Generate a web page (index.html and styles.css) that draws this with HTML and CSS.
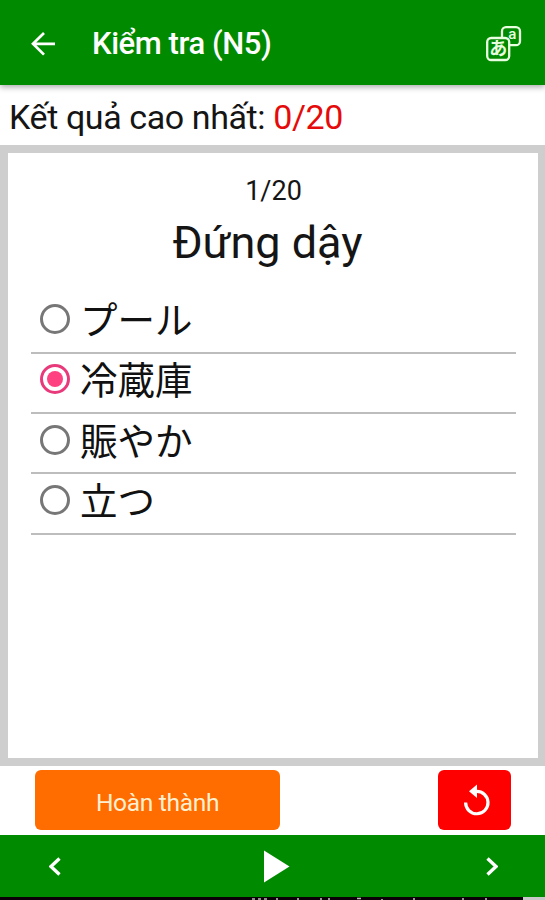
FILE: index.html
```html
<!DOCTYPE html>
<html lang="vi">
<head>
<meta charset="utf-8">
<meta name="viewport" content="width=device-width, initial-scale=1">
<title>Kiểm tra (N5)</title>
<link rel="stylesheet" href="styles.css">
</head>
<body>
<div class="app">
  <header class="topbar">
    <svg class="back" width="24" height="24" viewBox="0 0 24 24"><path d="M24 11.8H2M13 1L2 11.8L13 22.6"/></svg>
    <h1 class="title">Kiểm tra (N5)</h1>
    <svg class="translate" width="36" height="36" viewBox="0 0 36 36">
      <rect class="tile" x="16" y="1.2" width="18" height="18" rx="4"/>
      <rect class="tile" x="1.2" y="12" width="22" height="22" rx="4"/>
      <text class="latin" x="26.3" y="13.4">a</text>
      <text class="kana" x="12.2" y="29.3">あ</text>
    </svg>
  </header>
  <div class="score"><span class="score-label">Kết quả cao nhất:</span> <span class="score-value">0/20</span></div>
  <main class="frame">
    <section class="card">
      <div class="counter">1/20</div>
      <h2 class="question">Đứng dậy</h2>
      <div class="options">
        <div class="option"><span class="radio"></span><span class="answer" lang="ja">プール</span></div>
        <div class="option"><span class="radio selected"></span><span class="answer" lang="ja">冷蔵庫</span></div>
        <div class="option"><span class="radio"></span><span class="answer" lang="ja">賑やか</span></div>
        <div class="option"><span class="radio"></span><span class="answer" lang="ja">立つ</span></div>
      </div>
    </section>
  </main>
  <div class="actions">
    <button class="finish">Hoàn thành</button>
    <button class="restart" aria-label="Restart">
      <svg width="28" height="32" viewBox="0 0 28 32"><path class="ring" d="M13 7.4A11.2 11.2 0 1 1 2.6 18.5"/><path class="head" d="M14 .5V14L6 7.3Z"/></svg>
    </button>
  </div>
  <nav class="navbar">
    <svg width="12" height="19" viewBox="0 0 12 19"><path class="chevron" d="M10.5 1.5L2 9.5L10.5 17.5"/></svg>
    <svg class="play" width="26" height="33" viewBox="0 0 26 33"><path d="M0 .5L25.5 16.5L0 32.5Z"/></svg>
    <svg width="12" height="19" viewBox="0 0 12 19"><path class="chevron" d="M1.5 1.5L10 9.5L1.5 17.5"/></svg>
  </nav>
  <footer class="edge">
    <svg width="545" height="3" viewBox="0 0 545 3"><path class="ticks" d="M252 2h3M258 2h3M264 2h3M277 1v2M298 1v2M321 1v2M329 1v2M357 1.5h4M382 2v1M414 1v2M463 1v2M486 1v2"/><path class="corner" d="M523 0h22v3h-22z"/></svg>
  </footer>
</div>
</body>
</html>
```

FILE: styles.css
```css
* { box-sizing: border-box; }
body { margin: 0; background: #fff; color: #151515; font-family: Roboto, "Noto Sans CJK JP", sans-serif; }
svg { display: block; fill: none; }
.app { width: 545px; height: 900px; display: flex; flex-direction: column; overflow: hidden; }

.topbar { position: relative; height: 85px; flex: none; display: flex; align-items: center; padding: 2px 23px 0 31px; background: #008a00; box-shadow: 0 2px 6px rgba(0, 0, 0, .35); }
.back { stroke: #fff; stroke-width: 2.7; }
.title { margin: 0 auto 0 37px; font-size: 31px; font-weight: 500; line-height: 40px; letter-spacing: -.45px; color: #fff; white-space: nowrap; }
.tile { fill: #008a00; stroke: #e8ffe0; stroke-width: 2.3; }
.latin, .kana { fill: #e8ffe0; text-anchor: middle; }
.latin { font-size: 15px; font-weight: 500; }
.kana { font: 700 18px "Noto Sans CJK JP", sans-serif; }

.score { height: 60px; flex: none; padding: 12px 0 0 9px; font-size: 34px; line-height: 40px; letter-spacing: -.4px; white-space: nowrap; }
.score-value { color: #e50b0b; }

.frame { height: 621px; flex: none; padding: 8px 7px 8px 8px; background: #cecece; }
.card { height: 100%; padding: 22px 22px 0 23px; background: #fff; }
.counter { font-size: 27px; line-height: 32px; text-align: center; }
.question { margin: 8px 0 0; padding-right: 12px; font-size: 45px; font-weight: 400; line-height: 56px; text-align: center; }
.options { margin-top: 22.5px; }
.option { height: 60.3px; display: flex; align-items: center; gap: 10px; padding: 0 0 7px 9px; border-bottom: 2px solid #bdbdbd; font: 37.5px/50px "Noto Sans CJK JP", sans-serif; color: #111; }
.answer { padding-bottom: 2px; }
.radio { width: 30px; height: 30px; border: 3px solid #777; border-radius: 50%; display: grid; place-items: center; }
.selected { border-color: #e83a7b; }
.selected::after { content: ""; width: 16px; height: 16px; border-radius: 50%; background: #ff4081; }

.actions { height: 69px; flex: none; display: flex; justify-content: space-between; padding: 4px 34px 5px 35px; }
.actions button { border: 0; border-radius: 6px; padding: 0; }
.actions .finish { width: 245px; padding-top: 5px; background: #ff6c00; color: #fff0d2; font: 24.5px/30px Roboto, sans-serif; letter-spacing: -.3px; }
.actions .restart { width: 73px; padding-left: 4px; background: #f00; display: grid; place-items: center; }
.ring { stroke: #fff; stroke-width: 3.2; }
.head { fill: #fff; }

.navbar { height: 62px; flex: none; display: flex; align-items: center; justify-content: space-between; padding: 0 47px 0 49px; background: #008a00; }
.chevron { stroke: #fff; stroke-width: 3.3; }
.play { margin-left: 6px; }
.play path { fill: #fff; }
.edge { height: 3px; flex: none; background: #0c0008; }
.ticks { stroke: #bbb; stroke-width: 1.6; }
.corner { fill: #c8c8c8; }
```
